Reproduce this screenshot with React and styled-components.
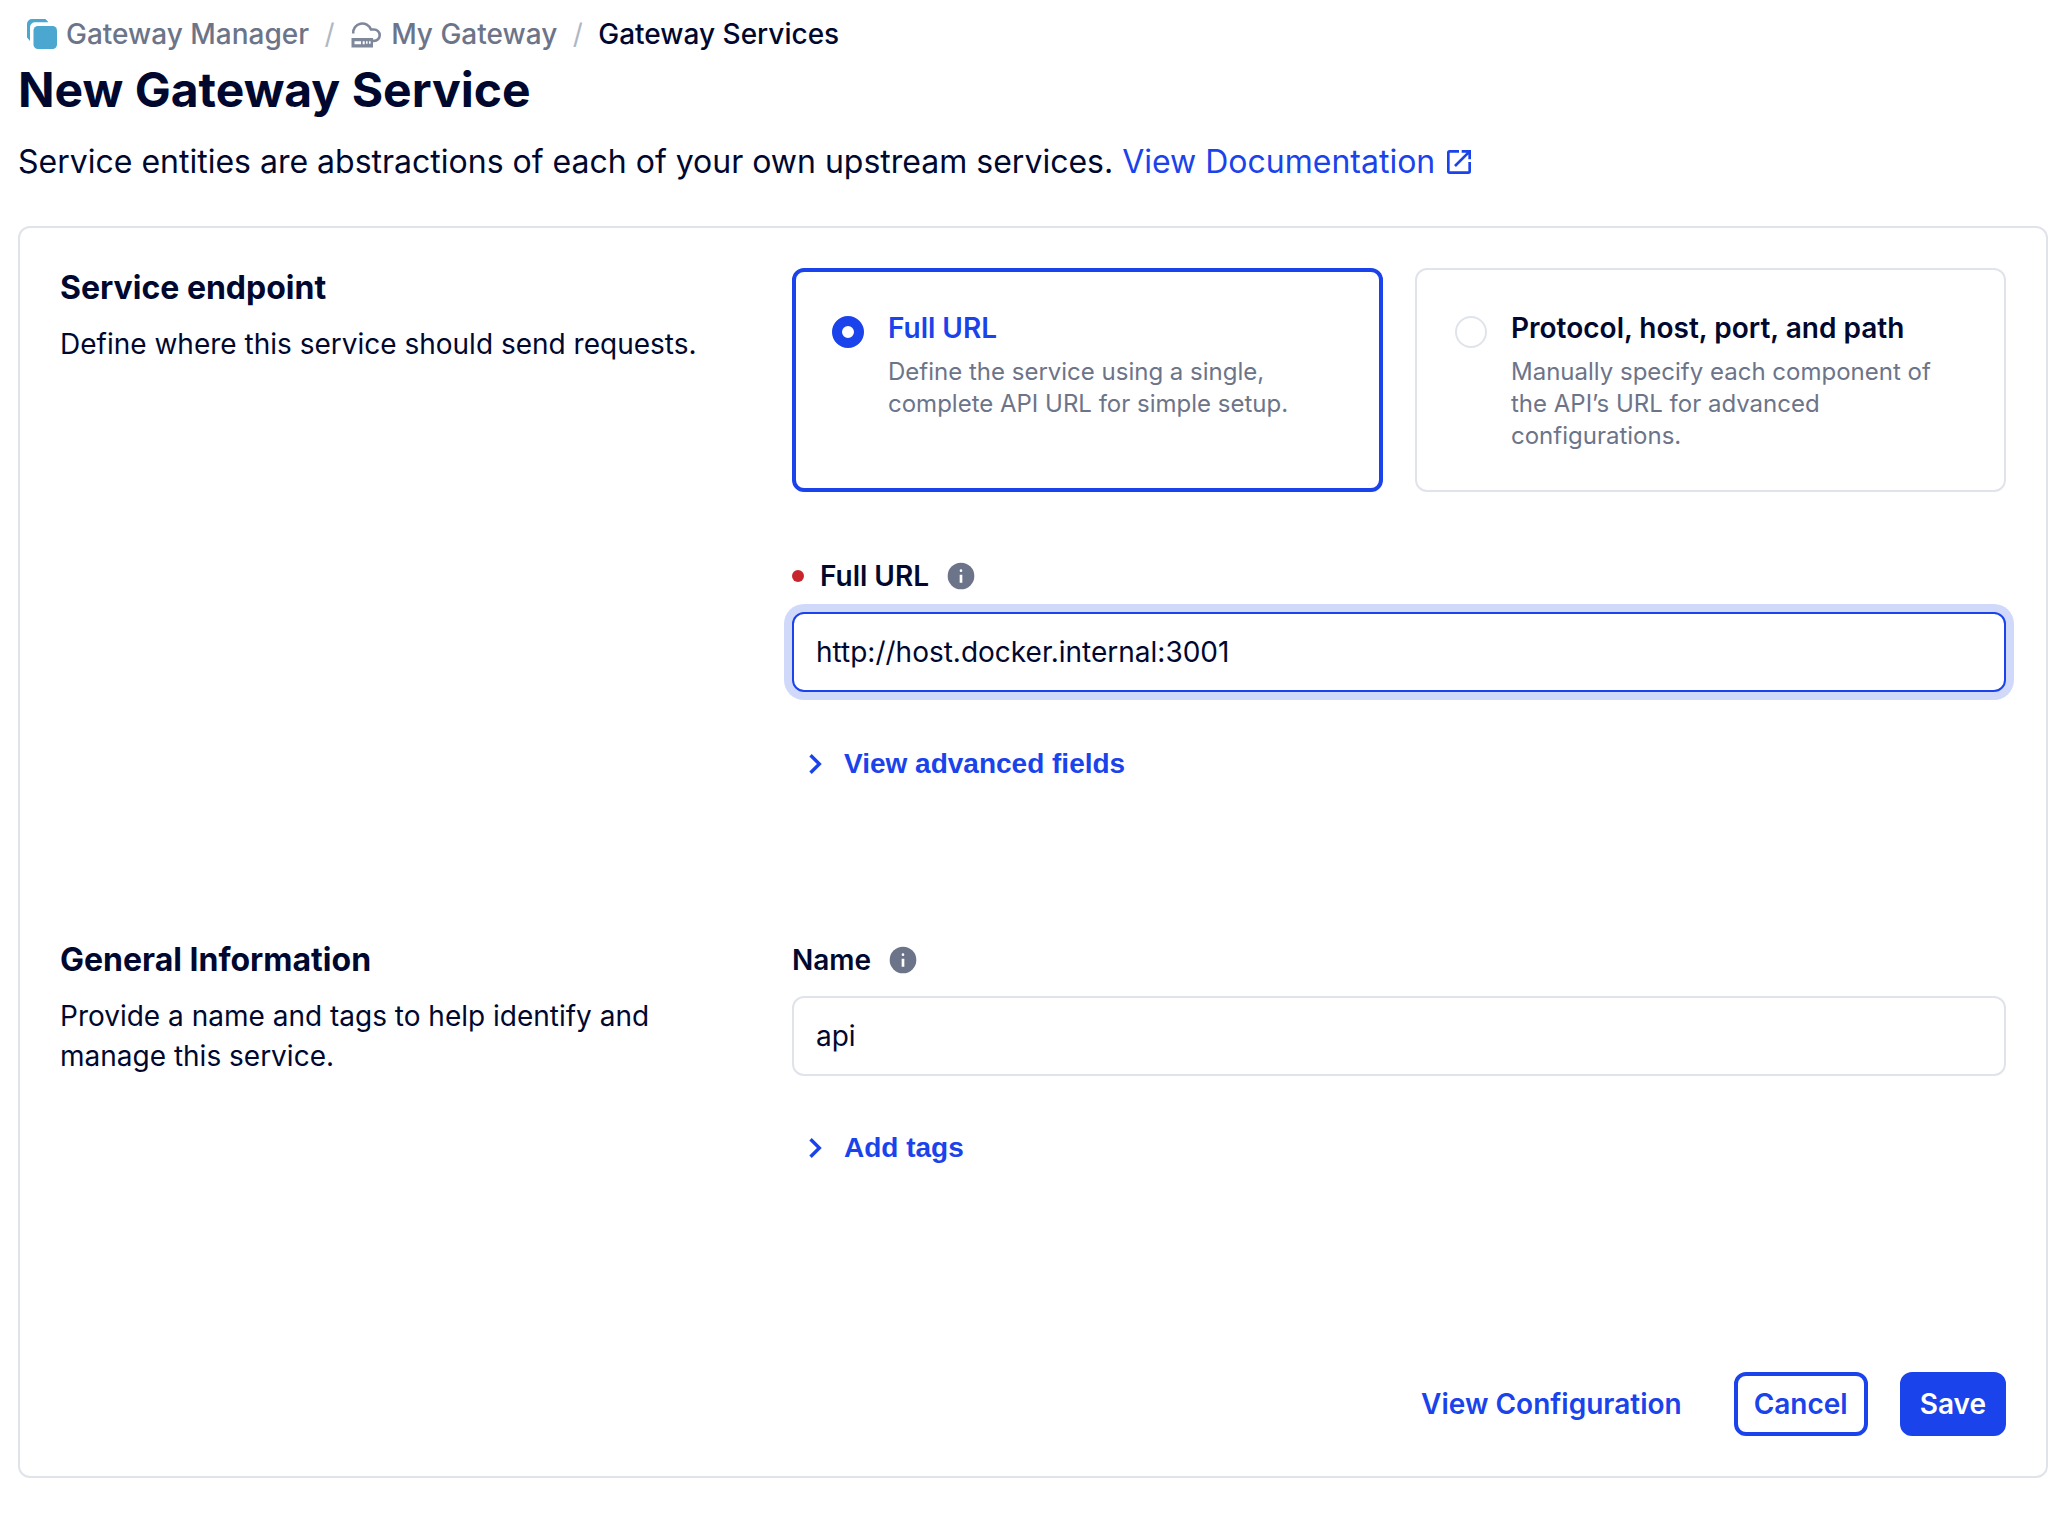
import React from 'react';
import styled, { createGlobalStyle } from 'styled-components';

const blue = '#1a43eb';
const ink = '#00082f';
const gray = '#6c7489';
const line = '#e0e4ea';
const inter = "Inter, 'Liberation Sans', sans-serif";

const GlobalStyle = createGlobalStyle`
  *, *::before, *::after { box-sizing: border-box; }
  body { margin: 0; background: #fff; color: ${ink}; font-family: ${inter}; font-size: 28px; line-height: 40px; }
  h1, h2, h3, p { margin: 0; }
`;

const Page = styled.main`
  padding: 14px 16px 36px 18px;
  height: 1514px;
  display: flex;
  flex-direction: column;
`;

const Breadcrumbs = styled.nav`
  display: flex;
  align-items: center;
  height: 40px;
  padding-left: 6px;
  font-weight: 500;
`;

const Crumb = styled.a`
  display: flex;
  align-items: center;
  gap: 6px;
  color: ${(p) => (p.$current ? ink : gray)};
`;

const Slash = styled.span`
  width: 41px;
  text-align: center;
  font-weight: 400;
  color: #afb7c5;
`;

const Title = styled.h1`
  margin-top: 8px;
  font-size: 48px;
  line-height: 56px;
  font-weight: 700;
`;

const Intro = styled.p`
  display: flex;
  align-items: center;
  gap: 9px;
  margin-top: 20px;
  font-size: 32px;
  line-height: 48px;
`;

const DocLink = styled.a`
  display: flex;
  align-items: center;
  gap: 8px;
  color: ${blue};
`;

const Card = styled.form`
  display: flex;
  flex-direction: column;
  flex: 1;
  margin-top: 40px;
  padding: 40px;
  border: 2px solid ${line};
  border-radius: 12px;
`;

const Section = styled.section`
  display: grid;
  grid-template-columns: 1fr 1214px;
  min-height: ${(p) => p.$height};
`;

const SectionInfo = styled.div`
  display: flex;
  flex-direction: column;
  gap: 16px;
  max-width: 660px;
`;

const SectionTitle = styled.h2`
  font-size: 32px;
  line-height: 40px;
  font-weight: 700;
`;

const Fields = styled.div`
  display: flex;
  flex-direction: column;
`;

const Choices = styled.div`
  display: grid;
  grid-template-columns: 1fr 1fr;
  gap: 32px;
  margin-bottom: 64px;
`;

const Choice = styled.label`
  display: flex;
  gap: 24px;
  height: 224px;
  padding: ${(p) => (p.$selected ? '36px' : '38px')};
  border: ${(p) => (p.$selected ? `4px solid ${blue}` : `2px solid ${line}`)};
  border-radius: 12px;
`;

const Radio = styled.span`
  flex: none;
  width: 32px;
  height: 32px;
  margin-top: 8px;
  border-radius: 50%;
  border: ${(p) => (p.$selected ? `10px solid ${blue}` : `2px solid ${line}`)};
`;

const ChoiceTitle = styled.h3`
  margin-bottom: 8px;
  font-size: 28px;
  line-height: 40px;
  font-weight: 600;
  color: ${(p) => (p.$selected ? blue : ink)};
`;

const ChoiceText = styled.p`
  font-size: 24px;
  line-height: 32px;
  color: ${gray};
`;

const Label = styled.div`
  display: flex;
  align-items: center;
  margin-bottom: 16px;
  font-weight: 600;

  svg { margin-left: 16px; }
`;

const Required = styled.span`
  width: 12px;
  height: 12px;
  margin-right: 16px;
  border-radius: 50%;
  background: #c8262c;
`;

const Input = styled.input`
  width: 100%;
  height: 80px;
  padding: 14px 22px;
  border: 2px solid ${(p) => (p.$focused ? blue : line)};
  border-radius: 12px;
  box-shadow: ${(p) => (p.$focused ? '0 0 0 8px #d1d9fb' : 'none')};
  outline: none;
  background: #fff;
  color: ${ink};
  font: 400 28px/48px ${inter};
`;

const Expander = styled.button`
  display: flex;
  align-items: center;
  gap: 12px;
  align-self: flex-start;
  height: 40px;
  margin-top: 52px;
  padding: 0 8px;
  border: 0;
  background: none;
  color: ${blue};
  font: 700 28px/40px 'Liberation Sans', Arial, sans-serif;
`;

const Footer = styled.footer`
  display: flex;
  justify-content: flex-end;
  gap: 32px;
  margin-top: auto;
`;

const buttonColors = {
  text: ['transparent', 'transparent', blue],
  outline: ['#fff', blue, blue],
  solid: [blue, blue, '#fff'],
};

const Button = styled.button`
  height: 64px;
  padding: 0 16px;
  border: 4px solid ${(p) => buttonColors[p.$kind][1]};
  border-radius: 12px;
  background: ${(p) => buttonColors[p.$kind][0]};
  color: ${(p) => buttonColors[p.$kind][2]};
  font: 600 28px/40px ${inter};
`;

const ManagerIcon = () => (
  <svg width="36" height="40" viewBox="0 0 36 40" fill="#4ba7d0">
    <path d="M3 23.500V10a5 5 0 0 1 5-5h13.500l3 3.300H11A5 5 0 0 0 6 13.300V27Z" />
    <rect x="9.500" y="12" width="23.500" height="23" rx="4.500" />
  </svg>
);

const GatewayIcon = () => (
  <svg width="35" height="36" viewBox="-1 0 35 36" fill="none" stroke="#7f879b" strokeWidth="2.600">
    <path d="M2.200 17.500A9.200 9.200 0 0 1 20 13.500h3a5.700 5.700 0 0 1 0 11.400h-1" />
    <path fill="#7f879b" stroke="none" fillRule="evenodd" d="M.500 22h21.500v9.500H.500ZM3.500 25.300v3h6.500v-3ZM11.700 25.300v3h2v-3ZM15 25.300v2.400h1.600v-2.400ZM18 25.300v2.400h1.600v-2.400Z" />
  </svg>
);

const ExternalIcon = () => (
  <svg width="32" height="32" viewBox="0 0 24 24" fill={blue}>
    <path d="M5 21a2 2 0 0 1-2-2V5a2 2 0 0 1 2-2h7v2H5v14h14v-7h2v7a2 2 0 0 1-2 2ZM9.700 15.700 8.300 14.300 17.600 5H14V3h7v7h-2V6.400Z" />
  </svg>
);

const InfoIcon = () => (
  <svg width="32" height="32" viewBox="0 0 24 24" fill={gray}>
    <circle cx="12" cy="12" r="10" />
    <path fill="#fff" d="M11 11h2v6h-2ZM12 7a1 1 0 1 1 0 2a1 1 0 1 1 0-2Z" />
  </svg>
);

const ChevronIcon = () => (
  <svg width="32" height="32" viewBox="0 0 24 24" fill={blue}>
    <path d="M8.800 4.500 16.300 12 8.800 19.500 7 17.700 12.700 12 7 6.300Z" />
  </svg>
);

const ChoiceCard = ({ selected, title, children }) => (
  <Choice $selected={selected}>
    <Radio $selected={selected} />
    <div>
      <ChoiceTitle $selected={selected}>{title}</ChoiceTitle>
      <ChoiceText>{children}</ChoiceText>
    </div>
  </Choice>
);

export default function App() {
  return (
    <>
      <GlobalStyle />
      <Page>
        <Breadcrumbs>
          <Crumb><ManagerIcon />Gateway Manager</Crumb>
          <Slash>/</Slash>
          <Crumb><GatewayIcon />My Gateway</Crumb>
          <Slash>/</Slash>
          <Crumb $current>Gateway Services</Crumb>
        </Breadcrumbs>
        <Title>New Gateway Service</Title>
        <Intro>
          <span>Service entities are abstractions of each of your own upstream services.</span>
          <DocLink>View Documentation<ExternalIcon /></DocLink>
        </Intro>
        <Card>
          <Section $height="672px">
            <SectionInfo>
              <SectionTitle>Service endpoint</SectionTitle>
              <p>Define where this service should send requests.</p>
            </SectionInfo>
            <Fields>
              <Choices>
                <ChoiceCard selected title="Full URL">
                  Define the service using a single, complete API URL for simple setup.
                </ChoiceCard>
                <ChoiceCard title="Protocol, host, port, and path">
                  Manually specify each component of the API’s URL for advanced configurations.
                </ChoiceCard>
              </Choices>
              <Label><Required />Full URL<InfoIcon /></Label>
              <Input $focused readOnly value="http://host.docker.internal:3001" />
              <Expander type="button"><ChevronIcon />View advanced fields</Expander>
            </Fields>
          </Section>
          <Section>
            <SectionInfo>
              <SectionTitle>General Information</SectionTitle>
              <p>Provide a name and tags to help identify and manage this service.</p>
            </SectionInfo>
            <Fields>
              <Label>Name<InfoIcon /></Label>
              <Input readOnly value="api" />
              <Expander type="button"><ChevronIcon />Add tags</Expander>
            </Fields>
          </Section>
          <Footer>
            <Button type="button" $kind="text">View Configuration</Button>
            <Button type="button" $kind="outline">Cancel</Button>
            <Button type="button" $kind="solid">Save</Button>
          </Footer>
        </Card>
      </Page>
    </>
  );
}
